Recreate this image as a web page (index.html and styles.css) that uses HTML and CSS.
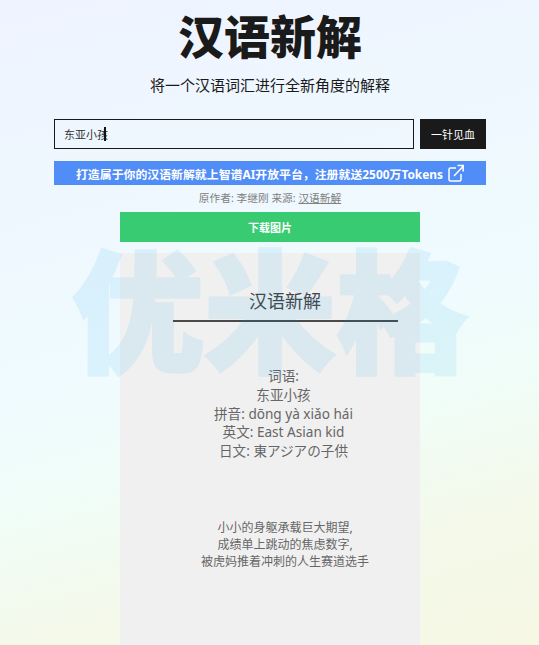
FILE: index.html
```html
<!DOCTYPE html>
<html lang="zh-CN">
<head>
  <meta charset="UTF-8">
  <meta name="viewport" content="width=device-width, initial-scale=1">
  <title>汉语新解</title>
  <link rel="stylesheet" href="styles.css">
</head>
<body>
  <div class="page">
    <h1 class="title">汉语新解</h1>
    <p class="subtitle">将一个汉语词汇进行全新角度的解释</p>

    <div class="search-row">
      <div class="word-field">
        <input class="word-input" type="text" value="东亚小孩">
        <span class="caret"></span>
      </div>
      <button class="submit-button">一针见血</button>
    </div>

    <a class="promo" href="#">
      <span>打造属于你的汉语新解就上智谱AI开放平台，注册就送2500万Tokens</span>
      <svg class="promo-icon" viewBox="0 0 16 18" width="16" height="18" fill="none" stroke="#fff" stroke-width="1.5">
        <path d="M8 4H2.5A1.5 1.5 0 0 0 1 5.5v10A1.5 1.5 0 0 0 2.5 17h9a1.5 1.5 0 0 0 1.5-1.5V10"/>
        <path d="M6 12L15 2.5M9.5 1.5H15.2V7.5"/>
      </svg>
    </a>

    <p class="credit">原作者: 李继刚 来源: <a href="#">汉语新解</a></p>

    <button class="download-button">下载图片</button>

    <div class="card">
      <h2 class="card-title">汉语新解</h2>
      <div class="card-rule"></div>
      <div class="card-word">
        <div>词语:</div>
        <div>东亚小孩</div>
        <div>拼音: dōng yà xiǎo hái</div>
        <div>英文: East Asian kid</div>
        <div>日文: <span lang="ja">東アジアの子供</span></div>
      </div>
      <p class="card-poem">小小的身躯承载巨大期望,<br>成绩单上跳动的焦虑数字,<br>被虎妈推着冲刺的人生赛道选手</p>
    </div>
  </div>

  <div class="watermark">优米格</div>
</body>
</html>
```

FILE: styles.css
```css
html, body {
  height: 100%;
  margin: 0;
  overflow: hidden;
}
body {
  font-family: "Noto Sans", "Noto Sans CJK SC", sans-serif;
  background: linear-gradient(165deg, #eef3ff 0%, #effbfe 50%, #f0fdf8 65%, #f4f9ea 82%, #f6f8e4 100%);
  color: #1a1a1a;
}
.page {
  box-sizing: border-box;
  height: 100%;
  display: flex;
  flex-direction: column;
  align-items: center;
  padding: 0 53px 0 54px;
}
.title {
  margin: 6px 0 0;
  font-size: 46px;
  line-height: 60px;
  font-weight: 900;
  color: #1a1a1a;
}
.subtitle {
  margin: 9px 0 0;
  font-size: 15px;
  line-height: 20px;
}
.search-row {
  display: flex;
  gap: 6px;
  width: 100%;
  margin-top: 24px;
}
.word-field {
  position: relative;
  flex: 1;
}
.word-input {
  display: block;
  box-sizing: border-box;
  width: 100%;
  height: 30px;
  padding: 0 9px;
  border: 1px solid #1a1a1a;
  border-radius: 0;
  background: transparent;
  font-family: inherit;
  font-size: 11px;
  color: #333;
  outline: none;
}
.caret {
  position: absolute;
  left: 50px;
  top: 8px;
  width: 2px;
  height: 14px;
  background: #111;
}
.submit-button {
  width: 66px;
  height: 30px;
  padding: 0;
  border: none;
  background: #1a1a1a;
  color: #fff;
  font-family: inherit;
  font-size: 11px;
}
.promo {
  display: flex;
  align-items: center;
  justify-content: center;
  gap: 5px;
  width: 100%;
  height: 24px;
  margin-top: 12px;
  background: #518df7;
  color: #fff;
  font-size: 11.9px;
  font-weight: 700;
  text-decoration: none;
}
.promo-icon {
  flex: none;
}
.credit {
  margin: 5px 0 0;
  font-size: 10.7px;
  line-height: 16px;
  color: #808080;
}
.credit a {
  color: #808080;
}
.download-button {
  width: 300px;
  height: 30px;
  margin-top: 6px;
  padding: 0;
  border: none;
  background: #38cb71;
  color: #fff;
  font-family: inherit;
  font-size: 11px;
  font-weight: 700;
}
.card {
  flex: 1;
  box-sizing: border-box;
  width: 300px;
  margin-top: 11px;
  padding: 36px 0 0 30px;
  background: #f0f0f0;
  text-align: center;
  color: #666;
}
.card-title {
  margin: 0;
  font-size: 18px;
  line-height: 24px;
  font-weight: 400;
  color: #444;
}
.card-rule {
  width: 225px;
  height: 2px;
  margin: 7px auto 0;
  background: #4a4a4a;
}
.card-word {
  margin-top: 45px;
  padding-right: 3px;
  font-size: 13.6px;
  line-height: 18.8px;
}
.card-poem {
  margin: 58px 0 0;
  font-size: 12px;
  line-height: 17px;
}
.watermark {
  position: fixed;
  left: 60px;
  top: 215px;
  width: 420px;
  font-family: "Noto Sans CJK SC", sans-serif;
  font-size: 132px;
  line-height: 180px;
  font-weight: 900;
  white-space: nowrap;
  text-align: center;
  color: #0096e6;
  -webkit-text-stroke: 3px #0096e6;
  opacity: 0.09;
  pointer-events: none;
}
```
